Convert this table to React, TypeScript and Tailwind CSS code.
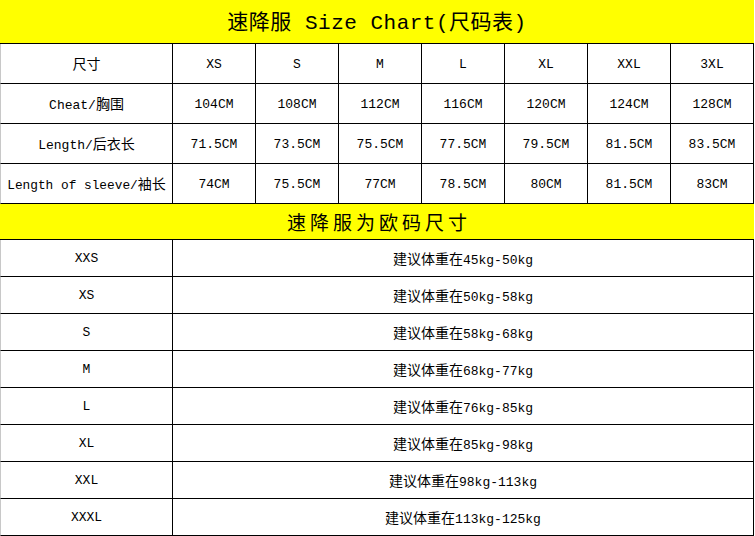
import React from "react";

const FONT = { fontFamily: '"Liberation Mono", "Noto Sans CJK SC", monospace' } as React.CSSProperties;

function Txt({ s, tight }: { s: string; tight?: boolean }) {
  const parts = s.split(/([\u4e00-\u9fff]+)/).filter(Boolean);
  return (
    <span className={tight ? "whitespace-nowrap text-[12.8px]" : "whitespace-nowrap text-[13px]"}>
      {parts.map((p, i) =>
        /[\u4e00-\u9fff]/.test(p) ? (
          <span key={i} className="text-[14px]" style={{ fontFamily: '"Noto Sans CJK SC", sans-serif' }}>
            {p}
          </span>
        ) : (
          <span key={i}>{p}</span>
        )
      )}
    </span>
  );
}

const sizes = ["XS", "S", "M", "L", "XL", "XXL", "3XL"];
const rows: [string, string[]][] = [
  ["Cheat/胸围", ["104CM", "108CM", "112CM", "116CM", "120CM", "124CM", "128CM"]],
  ["Length/后衣长", ["71.5CM", "73.5CM", "75.5CM", "77.5CM", "79.5CM", "81.5CM", "83.5CM"]],
  ["Length of sleeve/袖长", ["74CM", "75.5CM", "77CM", "78.5CM", "80CM", "81.5CM", "83CM"]],
];
const weights: [string, string][] = [
  ["XXS", "建议体重在45kg-50kg"],
  ["XS", "建议体重在50kg-58kg"],
  ["S", "建议体重在58kg-68kg"],
  ["M", "建议体重在68kg-77kg"],
  ["L", "建议体重在76kg-85kg"],
  ["XL", "建议体重在85kg-98kg"],
  ["XXL", "建议体重在98kg-113kg"],
  ["XXXL", "建议体重在113kg-125kg"],
];

export default function App() {
  return (
    <div className="w-[755px] h-[536px] bg-white text-black overflow-hidden" style={FONT}>
      <div className="w-[754px]">
        <div className="h-[44px] bg-[#ffff00] border-b border-black flex items-center justify-center pt-[1px]">
          <span className="text-[21px] tracking-[0.5px]">
            <span style={{ fontFamily: '"Noto Sans CJK SC", sans-serif' }}>速降服</span>
            {" Size Chart("}
            <span style={{ fontFamily: '"Noto Sans CJK SC", sans-serif' }}>尺码表</span>
            {")"}
          </span>
        </div>
        <div className="grid grid-cols-[173px_repeat(7,83px)]">
          <div className="h-[40px] pt-[2px] border-b border-r border-black border-l border-l-[#c8c8c8] flex items-center justify-center">
            <Txt s="尺寸" />
          </div>
          {sizes.map((s) => (
            <div key={s} className="h-[40px] pt-[2px] border-b border-r border-black flex items-center justify-center">
              <Txt s={s} />
            </div>
          ))}
          {rows.map(([label, vals]) => (
            <React.Fragment key={label}>
              <div className="h-[40px] pt-[2px] border-b border-r border-black border-l border-l-[#c8c8c8] flex items-center justify-center">
                <Txt s={label} tight={label.startsWith("Length of")} />
              </div>
              {vals.map((v, i) => (
                <div key={i} className="h-[40px] pt-[2px] border-b border-r border-black flex items-center justify-center">
                  <Txt s={v} />
                </div>
              ))}
            </React.Fragment>
          ))}
        </div>
        <div className="h-[36px] bg-[#ffff00] border-b border-black flex items-center justify-center pt-[1px]">
          <span className="text-[19px] tracking-[4px] pl-[4px]" style={{ fontFamily: '"Noto Sans CJK SC", sans-serif' }}>
            速降服为欧码尺寸
          </span>
        </div>
        <div className="grid grid-cols-[173px_581px]">
          {weights.map(([s, w]) => (
            <React.Fragment key={s}>
              <div className="h-[37px] pt-[2px] border-b border-r border-black border-l border-l-[#c8c8c8] flex items-center justify-center">
                <Txt s={s} />
              </div>
              <div className="h-[37px] pt-[2px] border-b border-r border-black flex items-center justify-center">
                <Txt s={w} />
              </div>
            </React.Fragment>
          ))}
        </div>
      </div>
    </div>
  );
}
